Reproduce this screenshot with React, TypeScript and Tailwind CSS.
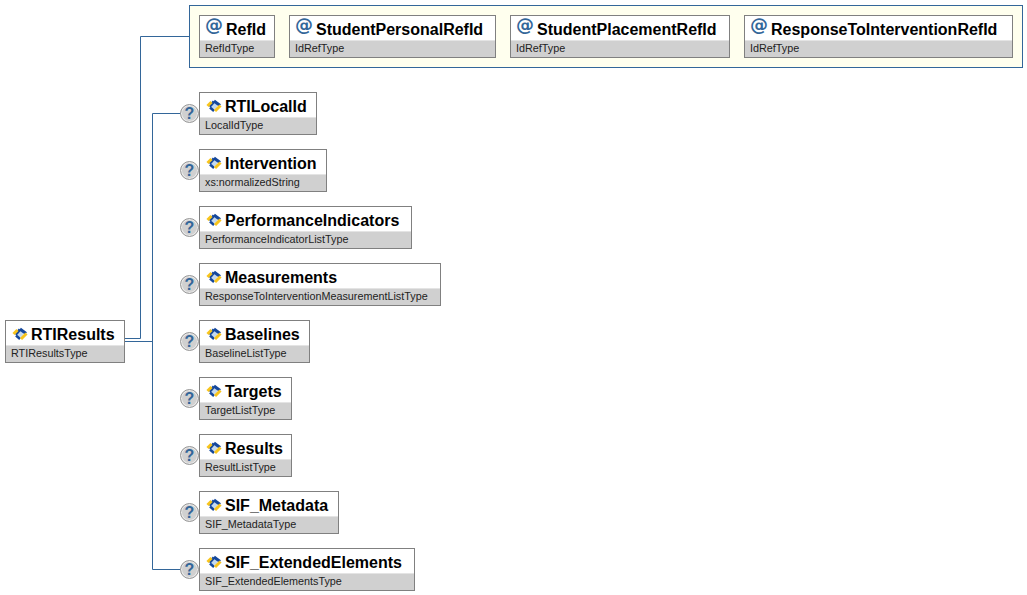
const font = "font-['Liberation_Sans',Arial,sans-serif]";

const children = [
  { name: "RTILocalId", type: "LocalIdType", width: "w-[118px]" },
  { name: "Intervention", type: "xs:normalizedString", width: "w-[128px]" },
  { name: "PerformanceIndicators", type: "PerformanceIndicatorListType", width: "w-[213px]" },
  { name: "Measurements", type: "ResponseToInterventionMeasurementListType", width: "w-[242px]" },
  { name: "Baselines", type: "BaselineListType", width: "w-[111px]" },
  { name: "Targets", type: "TargetListType", width: "w-[93px]" },
  { name: "Results", type: "ResultListType", width: "w-[93px]" },
  { name: "SIF_Metadata", type: "SIF_MetadataType", width: "w-[140px]" },
  { name: "SIF_ExtendedElements", type: "SIF_ExtendedElementsType", width: "w-[216px]" },
];

const attributes = [
  { name: "RefId", type: "RefIdType", width: "w-[76px]" },
  { name: "StudentPersonalRefId", type: "IdRefType", width: "w-[207px]" },
  { name: "StudentPlacementRefId", type: "IdRefType", width: "w-[220px]" },
  { name: "ResponseToInterventionRefId", type: "IdRefType", width: "w-[269px]" },
];

function ElementIcon() {
  return (
    <svg width="16" height="14" viewBox="0 0 16 14" className="shrink-0 mt-[2px]">
      <circle cx="8" cy="7" r="3" fill="#c4d9ee" />
      <path d="M3.5 7.5 L8 2.5" stroke="#14479c" strokeWidth="3" fill="none" />
      <path d="M5.5 3 L1.5 7" stroke="#f8c41c" strokeWidth="3" fill="none" />
      <path d="M8 2 L14 6.5" stroke="#14479c" strokeWidth="3" fill="none" />
      <path d="M4 8.5 L8 12" stroke="#14479c" strokeWidth="2.5" fill="none" />
      <path d="M14.5 6.5 L9 12" stroke="#f8c41c" strokeWidth="3" fill="none" />
    </svg>
  );
}

function Optional() {
  return (
    <div className="w-[19px] h-[19px] rounded-full bg-[#d0d0d0] border border-[#999999] shadow-[inset_0_0_0_1px_#ececec] flex items-center justify-center text-[#336699] text-[16px] font-bold leading-none">
      ?
    </div>
  );
}

function Node({ name, type, width, attr }: { name: string; type: string; width: string; attr?: boolean }) {
  return (
    <div className={`${width} h-[43px] border border-[#808080] bg-white flex flex-col`}>
      <div className={`h-[24px] flex items-center text-[16px] font-bold text-black leading-none ${attr ? "gap-[3px] pl-[5px]" : "gap-[3px] pl-[6px]"}`}>
        {attr ? (
          <span className="font-['DejaVu_Sans',sans-serif] text-[#336699] text-[18px] leading-none -mt-[7px]">@</span>
        ) : (
          <ElementIcon />
        )}
        <span className="mt-[4px]">{name}</span>
      </div>
      <div className="flex-1 bg-[#d0d0d0] border-t border-[#e4e4e4] pl-[5px] text-[10.8px] leading-[14px] text-[#222222]">
        {type}
      </div>
    </div>
  );
}

function Connectors() {
  return (
    <svg width="1027" height="595" className="absolute left-0 top-0 pointer-events-none" fill="none" stroke="#336699">
      <path d="M125 338.5 H140.5 V36.5 H189" />
      <path d="M125 341.5 H152.5" />
      <path d="M181 113.5 H152.5 V569.5 H181" />
    </svg>
  );
}

export default function App() {
  return (
    <div className={`${font} relative w-[1027px] h-[595px] bg-white overflow-hidden flex pl-[5px]`}>
      <Connectors />
      <div className="w-[120px] pt-[320px]">
        <Node name="RTIResults" type="RTIResultsType" width="w-[120px]" />
      </div>
      <div className="pl-[64px] pt-[5px]">
        <div className="relative w-[834px] h-[63px] border border-[#336699] bg-[#ffffee] flex gap-[14px] pl-[9px] pt-[9px]">
          {attributes.map((a) => (
            <Node key={a.name} {...a} attr />
          ))}
        </div>
        <div className="relative flex flex-col gap-[14px] pt-[24px] -ml-[9px]">
          {children.map((c) => (
            <div key={c.name} className="flex items-center">
              <Optional />
              <Node {...c} />
            </div>
          ))}
        </div>
      </div>
    </div>
  );
}
